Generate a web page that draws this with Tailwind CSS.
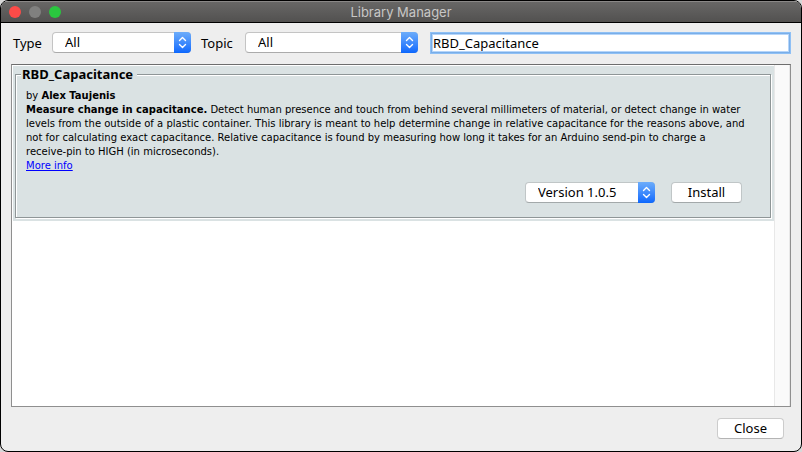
<!DOCTYPE html>
<html lang="en">
<head>
<meta charset="utf-8">
<meta name="viewport" content="width=device-width, initial-scale=1">
<title>Library Manager</title>
<script src="https://cdn.jsdelivr.net/npm/@tailwindcss/browser@4"></script>
</head>
<body class="bg-[#d8d8d8] font-['Noto_Sans','Open_Sans',sans-serif] text-[13px] leading-4 text-black">
<svg class="hidden" aria-hidden="true">
  <defs>
    <symbol id="stepper" viewBox="0 0 17 21"><path d="M5.5 8.5 8.5 5.5 11.5 8.5M5.5 12.5 8.5 15.5 11.5 12.5" fill="none" stroke="#fff" stroke-width="1.4" stroke-linecap="round" stroke-linejoin="round"/></symbol>
  </defs>
</svg>
<div class="flex h-screen flex-col overflow-hidden rounded-lg border border-black bg-[#eeeeee]">
  <header class="relative flex h-[22px] shrink-0 items-center border-t border-b border-t-[#8a8887] border-b-black bg-linear-to-b from-[#686766] to-[#525150] px-2">
    <div class="flex gap-2">
      <button aria-label="Close window" class="size-3 rounded-full bg-[#fc4b48]"></button>
      <button aria-label="Minimize window" class="size-3 rounded-full bg-[#80807f]"></button>
      <button aria-label="Zoom window" class="size-3 rounded-full bg-[#2ac63f]"></button>
    </div>
    <h1 class="pointer-events-none absolute inset-x-0 text-center font-['Inter',sans-serif] text-[13px] text-[#c8c7c6]">Library Manager</h1>
  </header>

  <main class="flex min-h-0 flex-1 flex-col px-[10px] pt-2 pb-3">
    <form class="flex h-6 shrink-0 items-center">
      <label for="type" class="ml-[2px] w-[39px]">Type</label>
      <div class="relative h-[22px] w-[139px]">
        <select id="type" class="h-[21px] w-full appearance-none rounded-[4px] border border-[#c4c4c4] border-b-[#ababab] bg-white pb-[2px] pl-3 pr-5 leading-4 outline-none"><option>All</option></select>
        <svg class="pointer-events-none absolute top-0 right-0 h-[21px] w-[17px] rounded-r-[4px] bg-linear-to-b from-[#6cacfa] to-[#0a67fd]"><use href="#stepper"/></svg>
      </div>
      <label for="topic" class="ml-[10px] w-11">Topic</label>
      <div class="relative h-[22px] w-[173px]">
        <select id="topic" class="h-[21px] w-full appearance-none rounded-[4px] border border-[#c4c4c4] border-b-[#ababab] bg-white pb-[2px] pl-3 pr-5 leading-4 outline-none"><option>All</option></select>
        <svg class="pointer-events-none absolute top-0 right-0 h-[21px] w-[17px] rounded-r-[4px] bg-linear-to-b from-[#6cacfa] to-[#0a67fd]"><use href="#stepper"/></svg>
      </div>
      <input aria-label="Filter your search" value="RBD_Capacitance" class="ml-[13px] mr-px h-5 min-w-0 flex-1 border border-[#79aee8] bg-white px-px leading-4 outline-none ring-1 ring-[#8fc0f5] inset-ring-1 inset-ring-[#b5d5fa]">
    </form>

    <section aria-label="Libraries" class="mt-[9px] flex min-h-0 flex-1 border border-[#8f8f8f] border-t-[#6e6e6e] bg-white">
      <div class="min-w-0 flex-1 p-px pr-0">
        <article class="bg-[#dae2e3] px-[2px] pb-[3px]">
          <fieldset class="mr-px border border-[#8f9697] px-[10px] pb-[14px] shadow-[1px_1px_0_#fff,inset_1px_1px_0_#fff]">
            <legend class="-ml-[5px] bg-[#dae2e3] pr-1 pl-px text-[13px] font-bold leading-4">RBD_Capacitance</legend>
            <div class="mt-[7px] font-['DejaVu_Sans',sans-serif] text-[10px] leading-[14px]">
              <p>by <b>Alex Taujenis</b></p>
              <p><b>Measure change in capacitance.</b> Detect human presence and touch from behind several millimeters of material, or detect change in water levels from the outside of a plastic container. This library is meant to help determine change in relative capacitance for the reasons above, and not for calculating exact capacitance. Relative capacitance is found by measuring how long it takes for an Arduino send-pin to charge a <span class="whitespace-nowrap">receive-pin</span> to HIGH (in microseconds).</p>
              <a href="#" class="block w-max text-[#0000ff] underline">More info</a>
            </div>
            <div class="mt-[9px] flex justify-end gap-4 pr-[18px]">
              <div class="relative h-[21px] w-[130px]">
                <select aria-label="Version" class="h-[21px] w-full appearance-none rounded-[4px] border border-[#c0c6c7] border-b-[#a3a9aa] bg-white pb-[2px] pl-3 pr-5 leading-4 outline-none"><option>Version 1.0.5</option></select>
                <svg class="pointer-events-none absolute top-0 right-0 h-[21px] w-[17px] rounded-r-[4px] bg-linear-to-b from-[#6cacfa] to-[#0a67fd]"><use href="#stepper"/></svg>
              </div>
              <button class="h-[21px] w-[71px] rounded-[4px] border border-[#c0c6c7] border-b-[#a3a9aa] bg-white pb-[2px]">Install</button>
            </div>
          </fieldset>
        </article>
      </div>
      <div class="w-4 shrink-0 border-x border-[#e8e8e8] bg-[#fafafa]"></div>
    </section>

    <footer class="mt-[11px] flex shrink-0 justify-end pr-[7px]">
      <button class="h-[21px] w-[67px] rounded-[4px] border border-[#cccccc] border-b-[#b4b4b4] bg-white pb-[2px]">Close</button>
    </footer>
  </main>
</div>
</body>
</html>
